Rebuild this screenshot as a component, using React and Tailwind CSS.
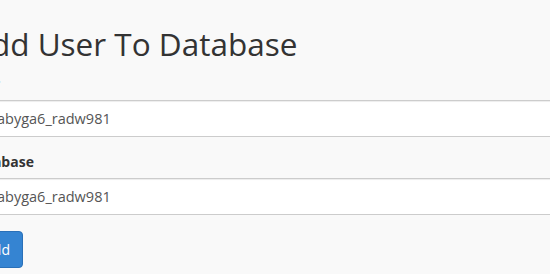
export default function App() {
  return (
    <div className="w-[550px] h-[274px] overflow-hidden bg-[#f9f9f9] font-['Open_Sans',sans-serif]">
      <div className="w-[640px] -ml-[29px] pt-[26px]">
        {/* Heading */}
        <h2 className="text-[31.5px] leading-[36px] font-normal text-[#333]">Add User To Database</h2>

        {/* User */}
        <div className="mt-[12px]">
          <label className="block -ml-[3px] text-[14px] leading-[20px] font-bold text-[#333] mb-[6px]">User</label>
          <input
            readOnly
            value="abyga6_radw981"
            className="block w-full h-[37px] px-[12px] pl-[25px] text-[14.5px] text-[#555] bg-white border border-[#ccc] rounded-[4px] shadow-[inset_0_1px_1px_rgba(0,0,0,0.075)] outline-none"
          />
        </div>

        {/* Database */}
        <div className="mt-[15px]">
          <label className="block -ml-[3px] text-[14px] leading-[20px] font-bold text-[#333] mb-[6px]">Database</label>
          <input
            readOnly
            value="abyga6_radw981"
            className="block w-full h-[37px] px-[12px] pl-[25px] text-[14.5px] text-[#555] bg-white border border-[#ccc] rounded-[4px] shadow-[inset_0_1px_1px_rgba(0,0,0,0.075)] outline-none"
          />
        </div>

        {/* Action */}
        <div className="mt-[16px]">
          <button className="h-[37px] px-[12px] text-[14px] text-white bg-[#3584d2] border border-[#2a70b8] rounded-[4px]">
            Add
          </button>
        </div>
      </div>
    </div>
  )
}
